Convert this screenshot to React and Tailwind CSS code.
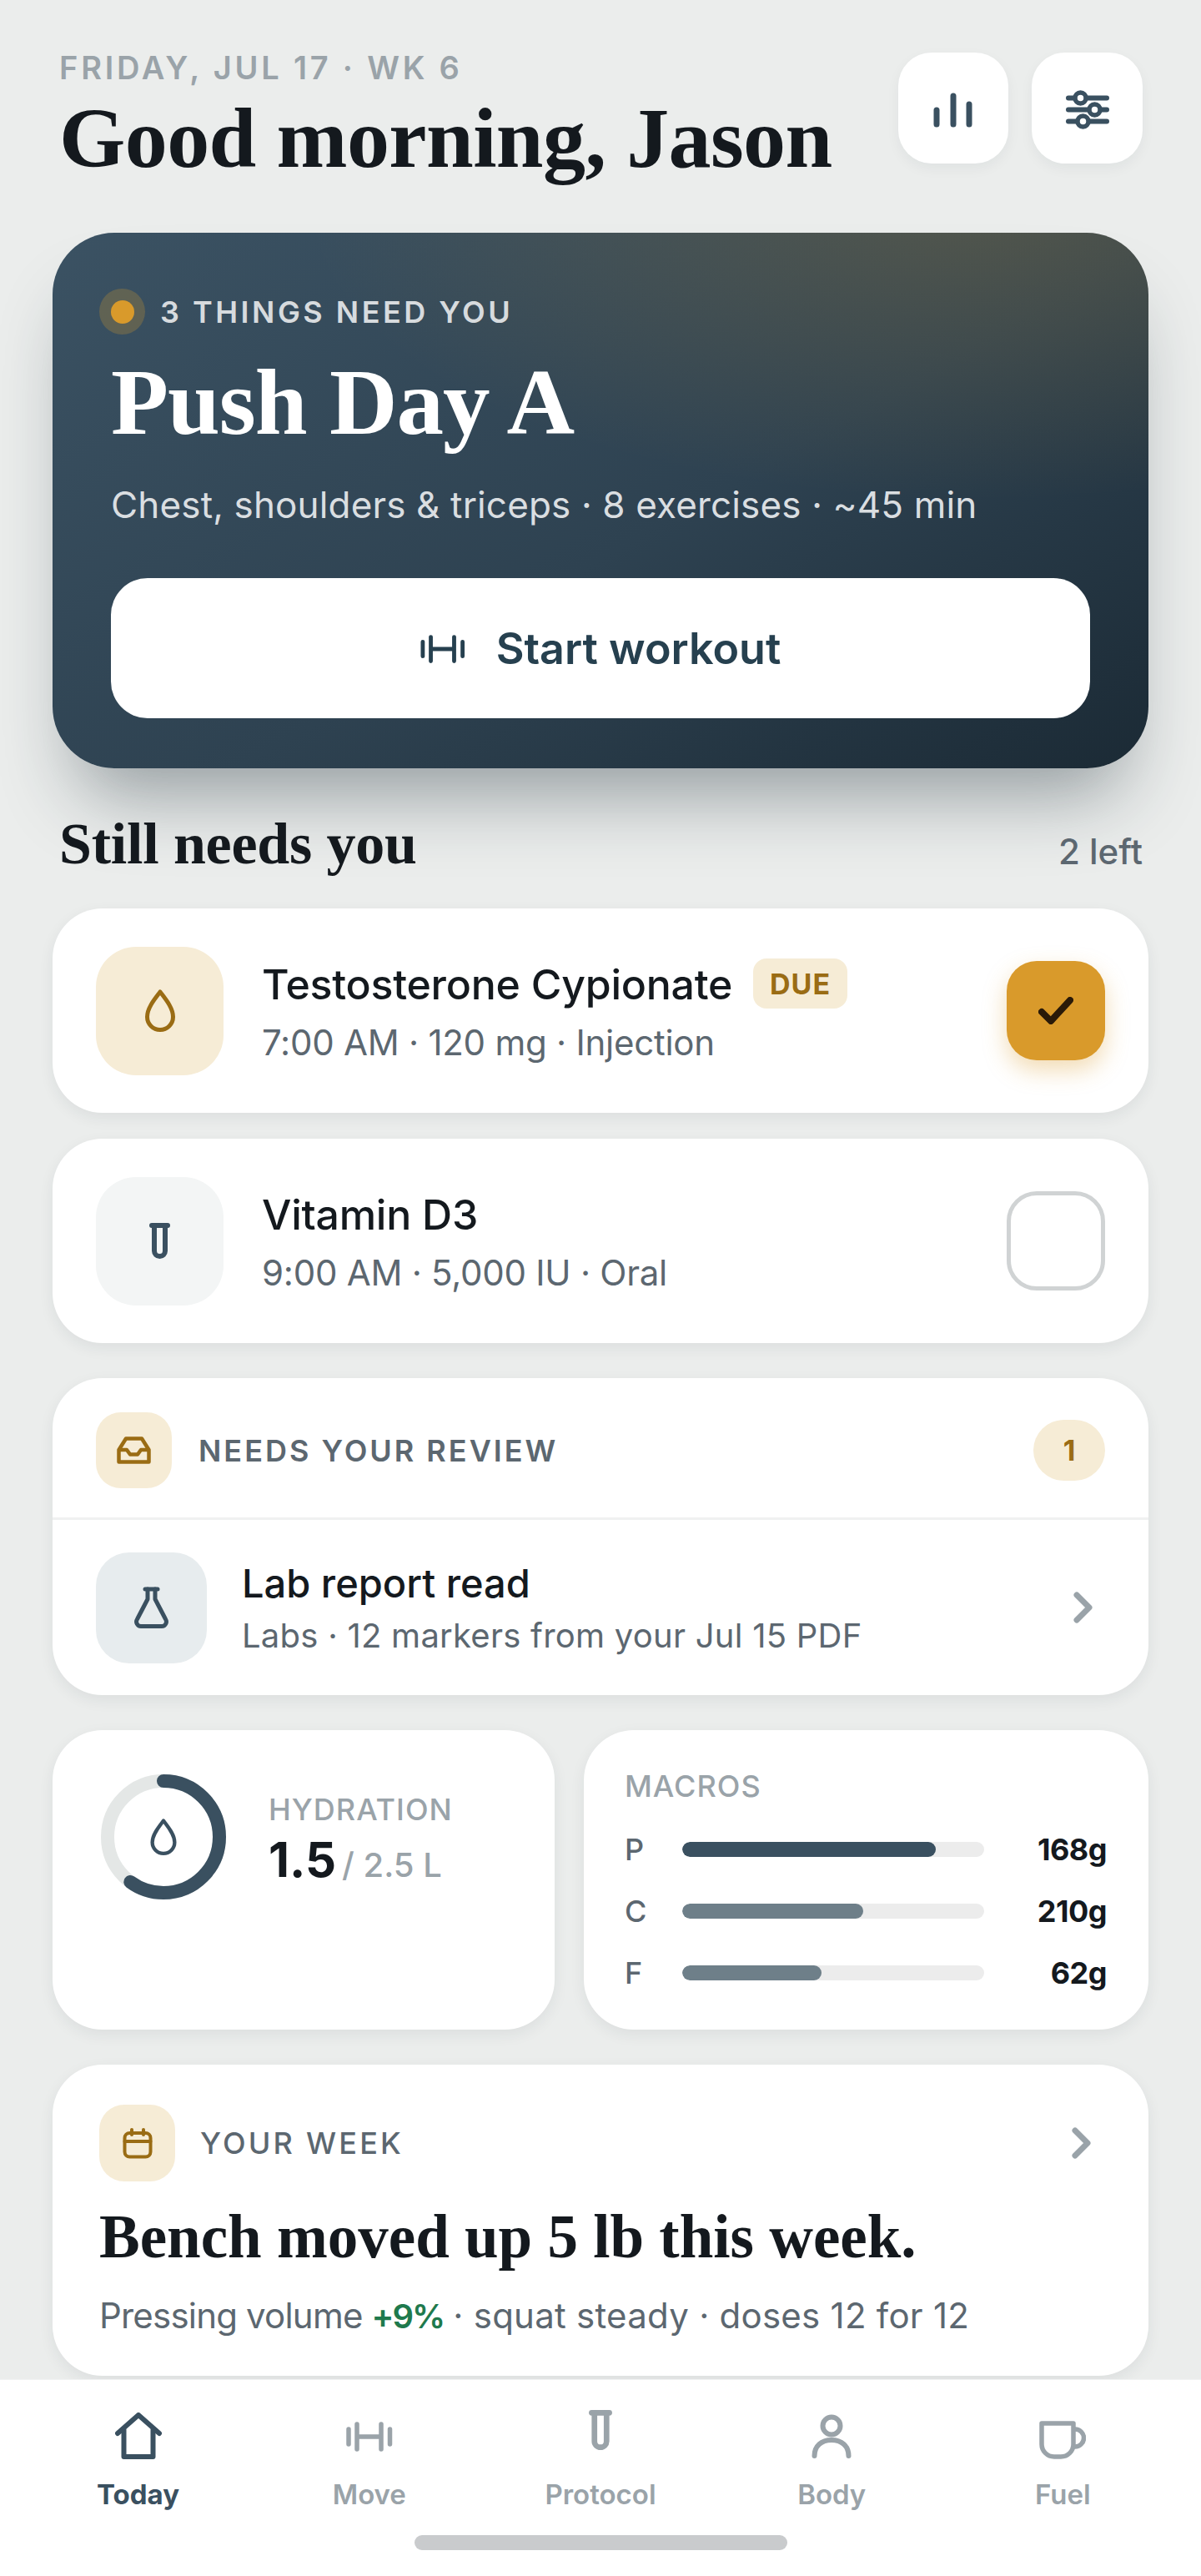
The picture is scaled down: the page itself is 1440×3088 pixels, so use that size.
import { useState } from 'react';

const DARK = '#3a5060';
const AMBER = '#9a6c14';
const GREY = '#9aa3a9';

const Drop = ({ color = AMBER, className = '' }) => (
  <svg viewBox="0 0 36 51" className={className} fill="none" stroke={color} strokeWidth="5" strokeLinejoin="round">
    <path d="M18 3C24 11 33.5 22 33.5 33A15.5 15.5 0 0 1 2.5 33C2.5 22 12 11 18 3Z" />
  </svg>
);

const Tube = ({ color = DARK, className = '' }) => (
  <svg viewBox="0 0 25 43" className={className} fill="none" stroke={color} strokeWidth="6" strokeLinecap="round">
    <path d="M3 3H22" />
    <path d="M6 3V33.5a6.5 6.5 0 0 0 13 0V3" />
  </svg>
);

const Dumbbell = ({ color = DARK, className = '', width = 5.5 }) => (
  <svg viewBox="0 0 56 36" className={className} fill="none" stroke={color} strokeWidth={width} strokeLinecap="round">
    <path d="M3 9V27M13 3V33M42 3V33M52.5 9V27M13 18H42" />
  </svg>
);

const Chevron = ({ className = '' }) => (
  <svg viewBox="0 0 24 40" className={className} fill="none" stroke={GREY} strokeWidth="7" strokeLinecap="round" strokeLinejoin="round">
    <path d="M5 5L20 20L5 35" />
  </svg>
);

const HomeIcon = ({ color }) => (
  <svg viewBox="0 0 56 56" className="w-[56px] h-[56px]" fill="none" stroke={color} strokeWidth="6" strokeLinecap="round" strokeLinejoin="round">
    <path d="M3 25L28 3L53 25" />
    <path d="M10.5 21V53H45.5V21" />
  </svg>
);

const PersonIcon = ({ color }) => (
  <svg viewBox="0 0 48 56" className="w-[48px] h-[56px]" fill="none" stroke={color} strokeWidth="6" strokeLinecap="round">
    <circle cx="24" cy="16" r="10.5" />
    <path d="M3.5 52C3.5 40 12 33 24 33C36 33 44.5 40 44.5 52" />
  </svg>
);

const MugIcon = ({ color }) => (
  <svg viewBox="0 0 56 46" className="w-[56px] h-[46px]" fill="none" stroke={color} strokeWidth="5.5" strokeLinejoin="round">
    <path d="M3 3H41V28A15 15 0 0 1 26 43H18A15 15 0 0 1 3 28Z" />
    <path d="M41 10H43A10.5 10.5 0 0 1 43 31H41" />
  </svg>
);

const macros = [
  { label: 'P', value: '168g', pct: 84, bar: 'bg-[#3a5060]' },
  { label: 'C', value: '210g', pct: 60, bar: 'bg-[#6e7f89]' },
  { label: 'F', value: '62g', pct: 46, bar: 'bg-[#6e7f89]' },
];

const tabs = [
  { label: 'Today', active: true },
  { label: 'Move' },
  { label: 'Protocol' },
  { label: 'Body' },
  { label: 'Fuel' },
];

const TabIcon = ({ label, color }) => {
  if (label === 'Today') return <HomeIcon color={color} />;
  if (label === 'Move') return <Dumbbell color={color} className="w-[56px] h-[36px] mb-[9px]" />;
  if (label === 'Protocol') return <Tube color={color} className="w-[28px] h-[48px] mb-[11px]" />;
  if (label === 'Body') return <PersonIcon color={color} />;
  return <MugIcon color={color} />;
};

const DoseRow = ({ icon, iconBg, title, sub, badge, done }) => (
  <div className="h-[245px] rounded-[60px] bg-white shadow-[0_6px_18px_rgba(27,42,53,0.07)] pl-[52px] pr-[52px] flex items-center">
    <div className={`w-[153px] h-[154px] rounded-[48px] flex items-center justify-center ${iconBg}`}>{icon}</div>
    <div className="ml-[46px] flex-1 mt-[2px]">
      <div className="flex items-center h-[62px]">
        <span className="text-[50px] leading-[62px] font-medium text-[#14191e] tracking-[-0.25px]">{title}</span>
        {badge && (
          <span className="ml-[25px] -mt-[2px] w-[113px] h-[60px] rounded-[16px] bg-[#f6ecd6] text-[#9a6c14] text-[34px] font-bold tracking-[1px] flex items-center justify-center">
            {badge}
          </span>
        )}
      </div>
      <div className="mt-[13px] text-[42px] leading-[52px] text-[#5c6770] tracking-[-0.25px]">{sub}</div>
    </div>
    {done ? (
      <div className="w-[118px] h-[119px] rounded-[36px] bg-[#d99a2b] shadow-[0_12px_28px_rgba(217,154,43,0.35)] flex items-center justify-center">
        <svg viewBox="0 0 42 33" className="w-[42px] h-[33px]" fill="none" stroke="#2a1a08" strokeWidth="8" strokeLinecap="round" strokeLinejoin="round">
          <path d="M4 18L15 29L38 4" />
        </svg>
      </div>
    ) : (
      <div className="w-[118px] h-[119px] rounded-[36px] border-[5px] border-[#d0d3d4]" />
    )}
  </div>
);

export default function App() {
  const [water] = useState(0.6);
  const circumference = 2 * Math.PI * 67;

  return (
    <div className="w-[1440px] h-[3088px] bg-[#ebedec] flex flex-col overflow-hidden font-['Inter',sans-serif]">
      <main className="flex-1 min-h-0 px-[63px] pt-[63px]">
        {/* Header */}
        <header className="h-[216px] flex justify-between pr-[7px]">
          <div className="pl-[8px]">
            <div className="-mt-[4px] text-[38px] leading-[44px] font-semibold tracking-[3.8px] text-[#9aa3a9]">FRIDAY, JUL 17 · WK 6</div>
            <h1 className="mt-[5px] text-[102px] leading-[116px] font-bold text-[#14191e] tracking-[-0.6px] font-['Liberation_Serif',serif]">
              Good morning, Jason
            </h1>
          </div>
          <div className="flex gap-[28px]">
            <button className="w-[132px] h-[133px] rounded-[40px] bg-white shadow-[0_6px_16px_rgba(27,42,53,0.05)] flex items-center justify-center">
              <svg viewBox="0 0 60 60" className="w-[60px] h-[60px]" fill="none" stroke={DARK} strokeWidth="7" strokeLinecap="round">
                <path d="M10 32V49M30 15V49M49 25V49" />
              </svg>
            </button>
            <button className="w-[133px] h-[133px] rounded-[40px] bg-white shadow-[0_6px_16px_rgba(27,42,53,0.05)] flex items-center justify-center">
              <svg viewBox="0 0 60 60" className="w-[60px] h-[60px]" fill="none" stroke={DARK} strokeLinecap="round">
                <path d="M7 17.5H53M7 31.5H53M7 45.5H53" strokeWidth="6" />
                <circle cx="21.5" cy="17.5" r="6.5" fill="#fff" strokeWidth="5.5" />
                <circle cx="38.5" cy="31.5" r="6.5" fill="#fff" strokeWidth="5.5" />
                <circle cx="24.5" cy="45.5" r="6.5" fill="#fff" strokeWidth="5.5" />
              </svg>
            </button>
          </div>
        </header>

        {/* Today's workout */}
        <section className="h-[642px] rounded-[74px] px-[70px] pt-[67px] shadow-[0_60px_90px_-30px_rgba(27,42,53,0.42)] bg-[radial-gradient(ellipse_62%_55%_at_85%_-5%,rgba(217,154,43,0.2),rgba(217,154,43,0)),linear-gradient(150deg,#3b5263_0%,#2e4251_55%,#1b2a35_100%)]">
          <div className="flex items-center h-[55px] -ml-[14px]">
            <span className="w-[55px] h-[55px] rounded-full bg-[#d99a2b]/25 flex items-center justify-center">
              <span className="w-[28px] h-[28px] rounded-full bg-[#d99a2b]" />
            </span>
            <span className="ml-[18px] text-[36px] font-semibold tracking-[3.5px] text-[#d7dbde]">3 THINGS NEED YOU</span>
          </div>
          <h2 className="mt-[16px] text-[113px] leading-[130px] font-bold text-white tracking-[-1px] font-['Liberation_Serif',serif]">Push Day A</h2>
          <p className="mt-[30px] text-[44px] leading-[56px] text-[#dadee1] tracking-[0.15px]">Chest, shoulders &amp; triceps · 8 exercises · ~45 min</p>
          <button className="mt-[60px] w-full h-[168px] rounded-[44px] bg-white flex items-center justify-center gap-[37px] pt-[2px]">
            <Dumbbell color="#26404f" className="w-[54px] h-[36px]" width={5} />
            <span className="text-[52px] font-semibold text-[#26404f]">Start workout</span>
          </button>
        </section>

        {/* Still needs you */}
        <div className="h-[168px] flex items-start justify-between pl-[8px] pr-[7px] pt-[48px]">
          <h3 className="text-[70px] leading-[86px] font-bold text-[#14191e] tracking-[-0.2px] font-['Liberation_Serif',serif]">Still needs you</h3>
          <span className="mt-[24px] text-[42px] leading-[56px] font-medium text-[#5c6770]">2 left</span>
        </div>

        <div className="flex flex-col gap-[31px]">
          <DoseRow
            icon={<Drop className="w-[36px] h-[51px]" />}
            iconBg="bg-[#f6ecd6]"
            title="Testosterone Cypionate"
            sub="7:00 AM · 120 mg · Injection"
            badge="DUE"
            done
          />
          <DoseRow
            icon={<Tube className="w-[25px] h-[43px]" />}
            iconBg="bg-[#f3f5f5]"
            title="Vitamin D3"
            sub="9:00 AM · 5,000 IU · Oral"
          />
        </div>

        {/* Needs your review */}
        <section className="mt-[42px] h-[380px] rounded-[60px] bg-white shadow-[0_6px_18px_rgba(27,42,53,0.07)]">
          <div className="h-[170px] pt-[6px] border-b-[3px] border-[#f0f1f1] pl-[52px] pr-[52px] flex items-center">
            <div className="w-[91px] h-[91px] rounded-[30px] bg-[#f6ecd6] flex items-center justify-center">
              <svg viewBox="0 0 41 33" className="w-[41px] h-[33px]" fill="none" stroke={AMBER} strokeWidth="4.5" strokeLinejoin="round">
                <path d="M11 2.5H30L38.5 16V30.5H2.5V16Z" />
                <path d="M3 16H12L16 21.5H25L29 16H38" />
              </svg>
            </div>
            <span className="ml-[32px] flex-1 text-[36px] font-semibold tracking-[3px] text-[#5c6770]">NEEDS YOUR REVIEW</span>
            <span className="w-[86px] h-[73px] rounded-full bg-[#f6ecd6] text-[#9a6c14] text-[34px] font-bold flex items-center justify-center">1</span>
          </div>
          <div className="h-[210px] pl-[52px] pr-[67px] flex items-center">
            <div className="w-[133px] h-[133px] rounded-[40px] bg-[#e7ecee] flex items-center justify-center">
              <svg viewBox="0 0 41 52" className="w-[41px] h-[52px]" fill="none" stroke={DARK} strokeWidth="5" strokeLinecap="round" strokeLinejoin="round">
                <path d="M13 4H28" />
                <path d="M16 4V16L3.5 40A5.5 5.5 0 0 0 8 48.5H33A5.5 5.5 0 0 0 37.5 40L25 16V4" />
              </svg>
            </div>
            <div className="ml-[42px] flex-1">
              <div className="text-[47px] leading-[58px] font-medium text-[#14191e]">Lab report read</div>
              <div className="mt-[9px] text-[40px] leading-[50px] text-[#5c6770] tracking-[0.25px]">Labs · 12 markers from your Jul 15 PDF</div>
            </div>
            <Chevron className="w-[24px] h-[40px]" />
          </div>
        </section>

        {/* Hydration and macros */}
        <div className="mt-[42px] grid grid-cols-[602px_677px] gap-[35px]">
          <section className="h-[359px] rounded-[60px] bg-white shadow-[0_6px_18px_rgba(27,42,53,0.07)] pl-[58px] pt-[53px] flex items-start">
            <div className="relative w-[150px] h-[150px]">
              <svg viewBox="0 0 150 150" className="w-[150px] h-[150px] -rotate-90" fill="none" strokeWidth="16">
                <circle cx="75" cy="75" r="67" stroke="#e4e7e6" />
                <circle
                  cx="75"
                  cy="75"
                  r="67"
                  stroke={DARK}
                  strokeLinecap="round"
                  strokeDasharray={`${circumference * water} ${circumference}`}
                />
              </svg>
              <div className="absolute inset-0 flex items-center justify-center">
                <Drop color={DARK} className="w-[32px] h-[44px]" />
              </div>
            </div>
            <div className="ml-[51px] mt-[20px]">
              <div className="text-[36px] leading-[44px] font-medium tracking-[1px] text-[#9aa3a9]">HYDRATION</div>
              <div className="mt-[4px] flex items-baseline">
                <span className="text-[58px] leading-[68px] font-bold text-[#14191e]">1.5</span>
                <span className="ml-[7px] text-[40px] font-medium text-[#9aa3a9]">/ 2.5 L</span>
              </div>
            </div>
          </section>

          <section className="h-[359px] rounded-[60px] bg-white shadow-[0_6px_18px_rgba(27,42,53,0.07)] pl-[49px] pr-[50px] pt-[45px]">
            <div className="text-[36px] leading-[44px] font-medium tracking-[1px] text-[#9aa3a9]">MACROS</div>
            <div className="mt-[32px] flex flex-col gap-[30px]">
              {macros.map((m) => (
                <div key={m.label} className="flex items-center h-[44px]">
                  <span className="w-[69px] text-[36px] font-medium text-[#5c6770]">{m.label}</span>
                  <div className="w-[362px] h-[18px] rounded-full bg-[#ececec] overflow-hidden">
                    <div className={`h-full rounded-full ${m.bar}`} style={{ width: `${m.pct}%` }} />
                  </div>
                  <span className="flex-1 text-right text-[36px] font-bold text-[#14191e] tracking-[-0.5px]">{m.value}</span>
                </div>
              ))}
            </div>
          </section>
        </div>

        {/* Your week */}
        <section className="mt-[42px] h-[373px] rounded-[60px] bg-white shadow-[0_6px_18px_rgba(27,42,53,0.07)] pl-[56px] pr-[69px] pt-[48px]">
          <div className="flex items-center h-[92px]">
            <div className="w-[91px] h-[92px] rounded-[30px] bg-[#f6ecd6] flex items-center justify-center">
              <svg viewBox="0 0 36 37" className="w-[36px] h-[37px]" fill="none" stroke={AMBER} strokeWidth="4" strokeLinecap="round">
                <rect x="2.5" y="6" width="31" height="28.5" rx="6" />
                <path d="M2.5 16H33.5M11 2V8M25 2V8" />
              </svg>
            </div>
            <span className="ml-[30px] flex-1 text-[36px] font-medium tracking-[3.2px] text-[#5c6770]">YOUR WEEK</span>
            <Chevron className="w-[24px] h-[40px]" />
          </div>
          <h3 className="mt-[22px] text-[73px] leading-[90px] font-bold text-[#14191e] font-['Liberation_Serif',serif]">Bench moved up 5 lb this week.</h3>
          <p className="mt-[22px] text-[42px] leading-[54px] text-[#5c6770] tracking-[-0.8px]">
            Pressing volume <span className="text-[40px] font-semibold tracking-[-2px] text-[#1f7a4d]">+9%</span> <span className="tracking-[0.25px]">· squat steady · doses 12 for 12</span>
          </p>
        </section>
      </main>

      {/* Tab bar */}
      <nav className="h-[236px] shrink-0 bg-white border-t border-[#f1f2f2] relative">
        <div className="grid grid-cols-5 px-[27px] pt-[37px]">
          {tabs.map((t) => {
            const color = t.active ? DARK : GREY;
            return (
              <div key={t.label} className="flex flex-col items-center">
                <div className="h-[58px] flex items-end justify-center">
                  <TabIcon label={t.label} color={color} />
                </div>
                <span className={`mt-[20px] text-[33px] leading-[44px] ${t.active ? 'font-bold text-[#3a5060]' : 'font-semibold text-[#9aa3a9]'}`}>{t.label}</span>
              </div>
            );
          })}
        </div>
        <div className="absolute left-[497px] bottom-[31px] w-[447px] h-[18px] rounded-full bg-[#c9cbcd]" />
      </nav>
    </div>
  );
}
